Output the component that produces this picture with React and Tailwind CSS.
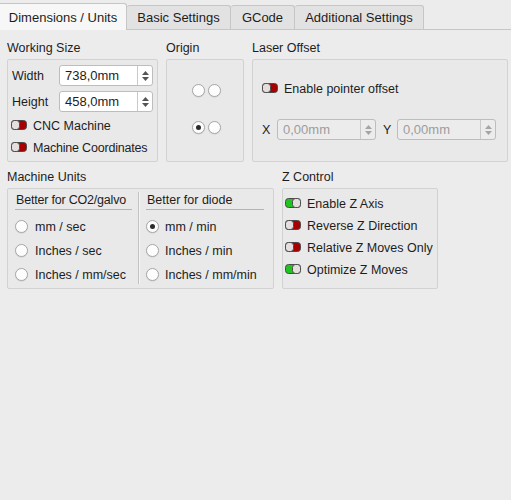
// Laser settings dialog — "Dimensions / Units" tab.

import React from 'react';

function Toggle({ on = false }) {
  // little two-tone pill used as a checkbox
  return (
    <svg width="16" height="10" viewBox="0 0 16 10" className="shrink-0">
      <rect x="0.5" y="0.5" width="15" height="9" rx="3" fill={on ? '#1fc41f' : '#a80000'} stroke="#4a4a4a" />
      <rect x={on ? 7.5 : 0.5} y="0.5" width="8" height="9" rx="3" fill="#e4dede" stroke="#4a4a4a" />
    </svg>
  );
}

function Radio({ checked = false }) {
  return (
    <span className="w-[13px] h-[13px] shrink-0 rounded-full border border-[#a8a8a8] bg-[#fdfdfd] flex items-center justify-center shadow-[0_0.5px_1px_rgba(0,0,0,0.12)]">
      {checked && <span className="w-[5px] h-[5px] rounded-full bg-[#2b2b2b]" />}
    </span>
  );
}

function SpinBox({ value, disabled = false, className = '' }) {
  const arrow = disabled ? '#a5a5a5' : '#555';
  return (
    <div className={`h-[21px] flex rounded-[3px] border border-[#bdbdbd] ${disabled ? 'bg-[#ececec]' : 'bg-white'} ${className}`}>
      <div className={`flex-1 flex items-center pl-[5px] pt-[1px] text-[13px] ${disabled ? 'text-[#9c9c9c]' : 'text-[#1d1d1d]'}`}>{value}</div>
      <div className="w-[15px] border-l border-[#c9c9c9] flex flex-col items-center justify-center gap-[2px]">
        <svg width="7" height="4" viewBox="0 0 7 4"><path d="M0 4 L3.5 0 L7 4 Z" fill={arrow} /></svg>
        <svg width="7" height="4" viewBox="0 0 7 4"><path d="M0 0 L3.5 4 L7 0 Z" fill={arrow} /></svg>
      </div>
    </div>
  );
}

function Group({ title, className = '', children }) {
  return (
    <div className="flex flex-col">
      <div className="h-[16px] leading-[18px] mb-[4px]">{title}</div>
      <div className={`border border-[#d2d2d2] bg-[#e9e9e9] rounded-[2px] ${className}`}>{children}</div>
    </div>
  );
}

const tabs = [
  { label: 'Dimensions / Units', w: 'w-[127px]', active: true },
  { label: 'Basic Settings', w: 'w-[104px]' },
  { label: 'GCode', w: 'w-[64px]' },
  { label: 'Additional Settings', w: 'w-[129px]' },
];

export default function App() {
  return (
    <div className="w-[511px] h-[500px] bg-[#ececec] text-[#1d1d1d] text-[12.5px] whitespace-nowrap font-['Liberation_Sans',Arial,sans-serif] overflow-hidden">
      {/* tab bar */}
      <div className="h-[30px] flex items-end border-b border-[#c6c6c6] text-[13px]">
        {tabs.map((t) =>
          t.active ? (
            <div key={t.label} className={`${t.w} h-[27px] -mb-px pt-[2px] bg-[#f7f7f7] border-r border-t border-[#c6c6c6] rounded-tr-[3px] flex items-center justify-center`}>
              {t.label}
            </div>
          ) : (
            <div key={t.label} className={`${t.w} h-[24px] pt-[1px] bg-[#e2e2e2] border-r border-t border-[#c6c6c6] rounded-t-[3px] flex items-center justify-center`}>
              {t.label}
            </div>
          )
        )}
      </div>

      <div className="px-[7px]">
        {/* first row */}
        <div className="flex mt-[9px]">
          <Group title="Working Size" className="w-[151px] h-[103px] pt-[5px]">
            <div className="flex items-center h-[21px]">
              <span className="w-[51px] pl-[4px] pt-[2px]">Width</span>
              <SpinBox value="738,0mm" className="w-[94px]" />
            </div>
            <div className="flex items-center h-[21px] mt-[5px]">
              <span className="w-[51px] pl-[4px] pt-[2px]">Height</span>
              <SpinBox value="458,0mm" className="w-[94px]" />
            </div>
            <div className="flex items-center h-[22px] mt-[2px] pl-[3px] gap-[6px]">
              <Toggle />
              <span className="pt-[2px]">CNC Machine</span>
            </div>
            <div className="flex items-center h-[22px] pl-[3px] gap-[6px]">
              <Toggle />
              <span className="pt-[2px] tracking-[-0.2px]">Machine Coordinates</span>
            </div>
          </Group>

          <div className="ml-[8px]">
            <Group title="Origin" className="w-[78px] h-[103px] pt-[24px] flex flex-col items-center">
              <div className="flex gap-[3px] pl-[2px]">
                <Radio />
                <Radio />
              </div>
              <div className="flex gap-[3px] pl-[2px] mt-[24px]">
                <Radio checked />
                <Radio />
              </div>
            </Group>
          </div>

          <div className="ml-[8px]">
            <Group title="Laser Offset" className="w-[256px] h-[103px] pt-[20px] pl-[9px]">
              <div className="flex items-center h-[16px] gap-[6px]">
                <Toggle />
                <span className="pt-[2px]">Enable pointer offset</span>
              </div>
              <div className="flex items-center mt-[23px]">
                <span className="w-[15px] pt-[2px]">X</span>
                <SpinBox value="0,00mm" disabled className="w-[99px]" />
                <span className="w-[21px] pl-[7px] pt-[2px]">Y</span>
                <SpinBox value="0,00mm" disabled className="w-[99px]" />
              </div>
            </Group>
          </div>
        </div>

        {/* second row */}
        <div className="flex mt-[6px]">
          <Group title="Machine Units" className="w-[267px] h-[101px] flex pl-[7px]">
            <div className="w-[117px]">
              <div className="h-[21px] border-b border-[#b4b4b4] flex items-center pl-[1px] pt-[2px] tracking-[-0.2px]">Better for CO2/galvo</div>
              <div className="mt-[4px]">
                {['mm / sec', 'Inches / sec', 'Inches / mm/sec'].map((l) => (
                  <div key={l} className="h-[24px] flex items-center gap-[7px]">
                    <Radio />
                    <span className="pt-[2px]">{l}</span>
                  </div>
                ))}
              </div>
            </div>
            <div className="ml-[6px] mt-[3px] mb-[4px] w-[2px] border-l border-[#c2c2c2] bg-[#f4f4f4]" />
            <div className="ml-[6px] w-[118px]">
              <div className="h-[21px] border-b border-[#b4b4b4] flex items-center pl-[1px] pt-[2px]">Better for diode</div>
              <div className="mt-[4px]">
                {[
                  ['mm / min', true],
                  ['Inches / min', false],
                  ['Inches / mm/min', false],
                ].map(([l, c]) => (
                  <div key={l} className="h-[24px] flex items-center gap-[6px]">
                    <Radio checked={c} />
                    <span className="pt-[2px]">{l}</span>
                  </div>
                ))}
              </div>
            </div>
          </Group>

          <div className="ml-[8px]">
            <Group title="Z Control" className="w-[156px] h-[101px] pt-[3px] pl-[2px]">
              {[
                ['Enable Z Axis', true],
                ['Reverse Z Direction', false],
                ['Relative Z Moves Only', false],
                ['Optimize Z Moves', true],
              ].map(([l, on]) => (
                <div key={l} className="h-[22px] flex items-center gap-[6px]">
                  <Toggle on={on} />
                  <span className="pt-[2px]">{l}</span>
                </div>
              ))}
            </Group>
          </div>
        </div>
      </div>
    </div>
  );
}
